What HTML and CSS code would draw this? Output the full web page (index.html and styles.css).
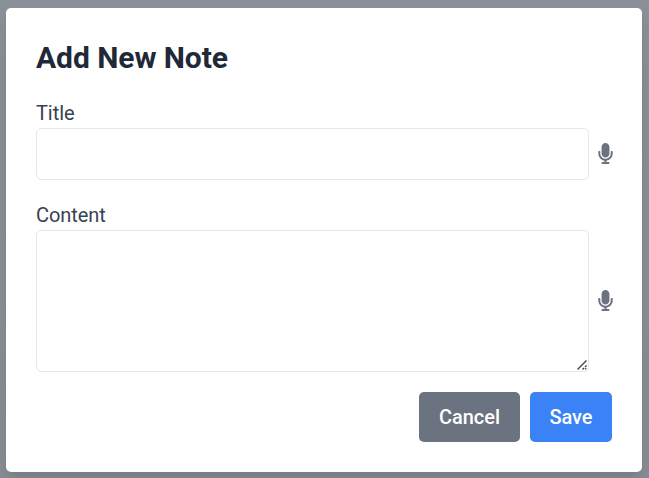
FILE: index.html
```html
<!DOCTYPE html>
<html lang="en">
<head>
<meta charset="utf-8">
<title>Add New Note</title>
<link rel="stylesheet" href="styles.css">
</head>
<body>
<svg class="sprite" aria-hidden="true">
<symbol id="mic" viewBox="0 0 352 512"><path d="M176 352c53.02 0 96-42.98 96-96V96c0-53.02-42.98-96-96-96S80 42.98 80 96v160c0 53.02 42.98 96 96 96zm160-160h-16c-8.84 0-16 7.16-16 16v48c0 74.8-64.49 134.82-140.79 127.38C96.71 376.89 48 317.11 48 250.3V208c0-8.84-7.16-16-16-16H16c-8.84 0-16 7.16-16 16v40.16c0 89.64 63.97 169.55 152 181.69V464H96c-8.84 0-16 7.16-16 16v16c0 8.84 7.16 16 16 16h160c8.84 0 16-7.16 16-16v-16c0-8.84-7.16-16-16-16h-56v-33.77C285.71 418.47 352 344.9 352 256v-48c0-8.84-7.16-16-16-16z"/></symbol>
</svg>
<form class="modal">
  <h2 class="heading">Add New Note</h2>
  <div class="field">
    <label class="label" for="title">Title</label>
    <div class="row">
      <input class="control" id="title" type="text">
      <button class="mic" type="button"><svg class="icon"><use href="#mic"/></svg></button>
    </div>
  </div>
  <div class="field">
    <label class="label" for="content">Content</label>
    <div class="row">
      <div class="area-wrap">
        <textarea class="control area" id="content"></textarea>
        <svg class="grip" viewBox="0 0 10 10"><path d="M.5 9.5l9-9M5.5 9.5L7 8M8 7l1.5-1.5M8.2 9.2l1-1"/></svg>
      </div>
      <button class="mic" type="button"><svg class="icon"><use href="#mic"/></svg></button>
    </div>
  </div>
  <div class="actions">
    <button class="btn cancel" type="button">Cancel</button>
    <button class="btn save" type="submit">Save</button>
  </div>
</form>
</body>
</html>
```
FILE: styles.css
```css
* { box-sizing: border-box; }
body {
  margin: 0;
  height: 478px;
  padding: 8px 7px 6px 6px;
  overflow: hidden;
  background: linear-gradient(#899097, #888d95);
  font: 20px/30px Roboto, sans-serif;
  letter-spacing: -.06px;
  color: #374151;
}
.sprite { display: none; }
.modal {
  height: 464px;
  padding: 30px;
  background: #fff;
  border-radius: 5px;
  box-shadow: 0 12px 19px -4px rgba(0, 0, 0, .1), 0 5px 8px -2px rgba(0, 0, 0, .05);
}
.heading {
  margin: 0 0 20px;
  font-size: 30px;
  line-height: 40px;
  font-weight: 700;
  color: #1f2937;
}
.field { margin-bottom: 20px; }
.label { display: block; }
.row { display: flex; align-items: center; }
.control {
  flex: 1;
  min-width: 0;
  height: 52px;
  padding: 10px;
  border: 1px solid #e5e7eb;
  border-radius: 5px;
  background: #fff;
  font: inherit;
  color: inherit;
  outline: 0;
}
.area-wrap { position: relative; display: flex; flex: 1; }
.area { height: 142px; resize: none; }
.grip {
  position: absolute;
  right: 2px;
  bottom: 2px;
  width: 10px;
  height: 10px;
  fill: none;
  stroke: #444;
  stroke-width: 1.4;
}
.mic {
  display: flex;
  width: 14.5px;
  margin: 0 0 1px 8.5px;
  padding: 0;
  border: 0;
  background: none;
  color: #6b7280;
}
.icon { width: 15px; height: 21px; flex: none; fill: currentColor; }
.actions { display: flex; justify-content: flex-end; gap: 10px; }
.btn {
  height: 50px;
  padding: 0;
  border: 0;
  border-radius: 5px;
  font: 500 20px/30px Roboto, sans-serif;
  letter-spacing: inherit;
  color: #fff;
}
.cancel { width: 101px; background: #6b7280; }
.save { width: 82px; background: #3b82f6; }
```
